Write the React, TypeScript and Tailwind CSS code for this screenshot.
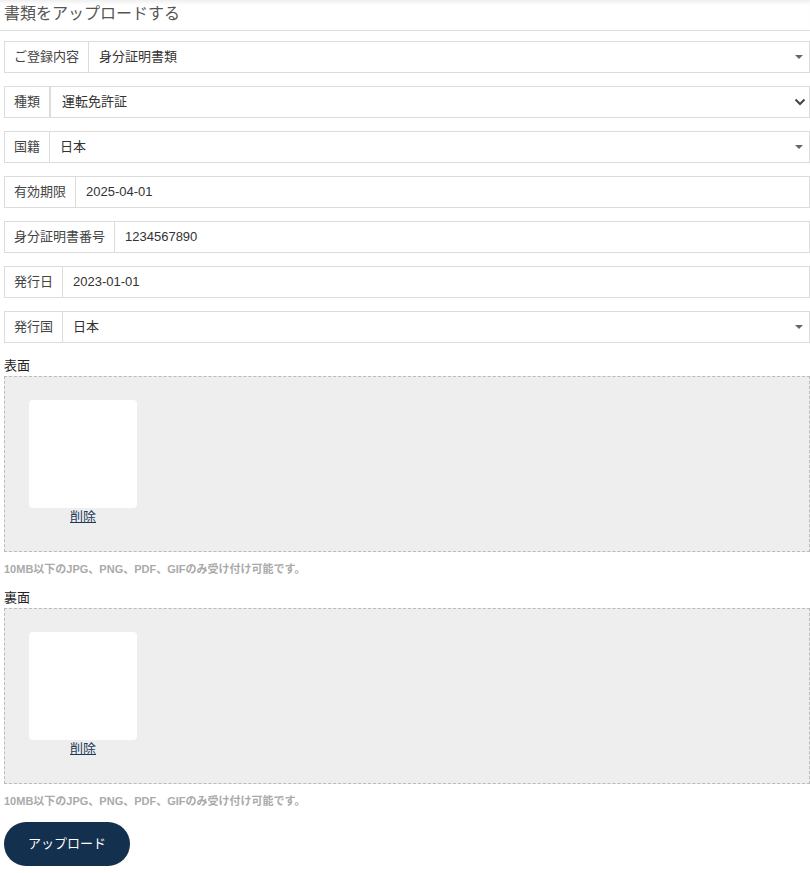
import React from "react"

const font = { fontFamily: '"Liberation Sans", "Noto Sans CJK JP", sans-serif' }

function Caret() {
  return (
    <svg width="8" height="5" viewBox="0 0 8 5" className="mr-[6px] shrink-0">
      <path d="M0 0 L8 0 L4 4 Z" fill="#666" />
    </svg>
  )
}

function Chevron() {
  return (
    <svg width="12" height="8" viewBox="0 0 12 8" className="mr-[3px] shrink-0">
      <path d="M1.5 1.5 L6 6 L10.5 1.5" fill="none" stroke="#444" strokeWidth="2" />
    </svg>
  )
}

function Row({ label, value, kind }: { label: string; value: string; kind?: "caret" | "native" }) {
  return (
    <div className="flex h-[32px] border border-[#dcdcdc] bg-white">
      <div className="flex items-center px-[9px] text-[13px] text-[#444] border-r border-[#dcdcdc] whitespace-nowrap">
        {label}
      </div>
      <div
        className={`flex flex-1 items-center justify-between text-[13px] text-[#333] ${
          kind === "native" ? "pl-[11px] border-l border-[#dcdcdc]" : "pl-[10px]"
        }`}
      >
        <span>{value}</span>
        {kind === "caret" && <Caret />}
        {kind === "native" && <Chevron />}
      </div>
    </div>
  )
}

function UploadBox({ title }: { title: string }) {
  return (
    <div>
      <div className="text-[13px] leading-[20px] text-[#222]">{title}</div>
      <div className="h-[176px] border border-dashed border-[#bbb] bg-[#eee] pl-[24px] pt-[23px]">
        <div className="flex w-[108px] flex-col items-center">
          <div className="h-[108px] w-[108px] rounded-[4px] bg-white" />
          <a href="#" className="text-[13px] leading-[18px] text-[#1c3a5a] underline">
            削除
          </a>
        </div>
      </div>
      <div className="mt-[10px] text-[11px] font-bold leading-[14px] text-[#aaa]">
        10MB以下のJPG、PNG、PDF、GIFのみ受け付け可能です。
      </div>
    </div>
  )
}

export default function App() {
  return (
    <div className="min-h-[873px] w-[810px] bg-white" style={font}>
      <div className="h-[31px] border-b border-[#ddd] pl-[4px] pt-[3px] text-[16px] leading-[22px] text-[#555] shadow-[inset_0_5px_4px_-3px_rgba(0,0,0,0.08)]">
        書類をアップロードする
      </div>

      <div className="pl-[4px]">
        <div className="mt-[10px] flex flex-col gap-[13px]">
          <Row label="ご登録内容" value="身分証明書類" kind="caret" />
          <Row label="種類" value="運転免許証" kind="native" />
          <Row label="国籍" value="日本" kind="caret" />
          <Row label="有効期限" value="2025-04-01" />
          <Row label="身分証明書番号" value="1234567890" />
          <Row label="発行日" value="2023-01-01" />
          <Row label="発行国" value="日本" kind="caret" />
        </div>

        <div className="mt-[13px]">
          <UploadBox title="表面" />
        </div>
        <div className="mt-[12px]">
          <UploadBox title="裏面" />
        </div>

        <button className="mt-[14px] h-[44px] w-[126px] rounded-full bg-[#13304e] text-[13px] text-white">
          アップロード
        </button>
      </div>
    </div>
  )
}
